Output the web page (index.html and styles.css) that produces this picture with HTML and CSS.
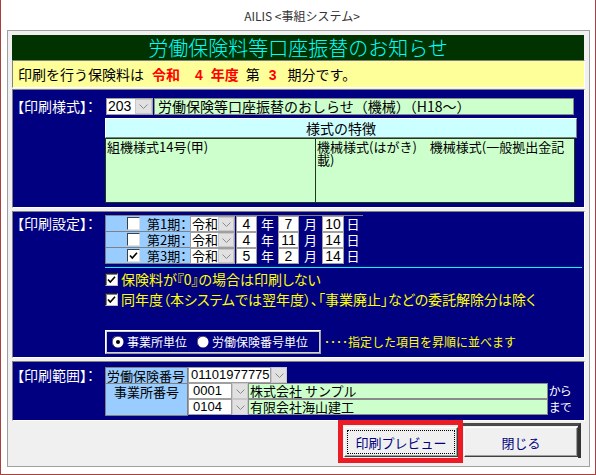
FILE: index.html
```html
<!DOCTYPE html>
<html lang="ja">
<head>
<meta charset="utf-8">
<title>AILIS</title>
<link rel="stylesheet" href="styles.css">
</head>
<body>
<div class="window">
  <div class="titlebar">AILIS &lt;事組システム&gt;</div>
  <div class="frame">
    <div class="header">労働保険料等口座振替のお知らせ</div>
    <div class="notice">印刷を行う保険料は<span class="red m-a">令和</span><span class="red m-b">4</span><span class="red m-c">年度</span><span class="m-d">第</span><span class="red m-e">3</span><span class="m-f">期分です。</span></div>

    <section class="panel panel-style">
      <div class="plabel">【印刷様式】：</div>
      <div class="pbody">
        <div class="row1">
          <div class="combo c-203"><span class="cval">203</span><span class="dd"><svg class="chev" viewBox="0 0 9 5" width="9" height="5"><polyline points="0.5,0.5 4.5,4.5 8.5,0.5" fill="none" stroke="#8a8a8a" stroke-width="1"/></svg></span></div>
          <div class="gfield">労働保険等口座振替のおしらせ（機械）（H18～）</div>
        </div>
        <div class="feat-head">様式の特徴</div>
        <div class="feat-body">
          <div class="fc fc-left">組機様式14号(甲)</div>
          <div class="fc fc-right">機械様式(はがき)　機械様式(一般拠出金記<br>載)</div>
        </div>
      </div>
    </section>

    <section class="panel panel-set">
      <div class="plabel">【印刷設定】：</div>
      <div class="pbody">
        <div class="ptable">
          <div class="prow">
            <div class="pcell"><span class="cb"></span><span class="plab">第1期：</span></div>
            <div class="combo c-era"><span class="cval">令和</span><span class="dd"><svg class="chev" viewBox="0 0 9 5" width="9" height="5"><polyline points="0.5,0.5 4.5,4.5 8.5,0.5" fill="none" stroke="#8a8a8a" stroke-width="1"/></svg></span></div>
            <span class="nbox n-y">4</span><span class="unit u-y">年</span>
            <span class="nbox n-m">7</span><span class="unit u-m">月</span>
            <span class="nbox n-d">10</span><span class="unit u-d">日</span>
          </div>
          <div class="prow">
            <div class="pcell"><span class="cb"></span><span class="plab">第2期：</span></div>
            <div class="combo c-era"><span class="cval">令和</span><span class="dd"><svg class="chev" viewBox="0 0 9 5" width="9" height="5"><polyline points="0.5,0.5 4.5,4.5 8.5,0.5" fill="none" stroke="#8a8a8a" stroke-width="1"/></svg></span></div>
            <span class="nbox n-y">4</span><span class="unit u-y">年</span>
            <span class="nbox n-m">11</span><span class="unit u-m">月</span>
            <span class="nbox n-d">14</span><span class="unit u-d">日</span>
          </div>
          <div class="prow">
            <div class="pcell"><span class="cb"><svg viewBox="0 0 11 11" width="11" height="11"><path d="M2 5.5 L4.3 8 L9 2.8" fill="none" stroke="#000" stroke-width="1.6"/></svg></span><span class="plab">第3期：</span></div>
            <div class="combo c-era"><span class="cval">令和</span><span class="dd"><svg class="chev" viewBox="0 0 9 5" width="9" height="5"><polyline points="0.5,0.5 4.5,4.5 8.5,0.5" fill="none" stroke="#8a8a8a" stroke-width="1"/></svg></span></div>
            <span class="nbox n-y">5</span><span class="unit u-y">年</span>
            <span class="nbox n-m">2</span><span class="unit u-m">月</span>
            <span class="nbox n-d">14</span><span class="unit u-d">日</span>
          </div>
        </div>
        <div class="hr"></div>
        <div class="crow crow-first"><span class="cb cb-dark"><svg viewBox="0 0 11 11" width="11" height="11"><path d="M2 5.5 L4.3 8 L9 2.8" fill="none" stroke="#000" stroke-width="1.6"/></svg></span><span class="ctext">保険料が『0』の場合は印刷しない</span></div>
        <div class="crow"><span class="cb cb-dark"><svg viewBox="0 0 11 11" width="11" height="11"><path d="M2 5.5 L4.3 8 L9 2.8" fill="none" stroke="#000" stroke-width="1.6"/></svg></span><span class="ctext">同年度（本システムでは翌年度）、「事業廃止」などの委託解除分は除く</span></div>
        <div class="sortline">
          <div class="radiogroup">
            <span class="radio"><svg viewBox="0 0 12 12" width="12" height="12"><circle cx="6" cy="6" r="5.5" fill="#fff"/><path d="M1.5 9.5 A5 5 0 0 1 9.5 1.5" fill="none" stroke="#606060" stroke-width="1"/><circle cx="6" cy="6" r="2" fill="#000"/></svg></span>
            <span class="rtext">事業所単位</span>
            <span class="radio r2"><svg viewBox="0 0 12 12" width="12" height="12"><circle cx="6" cy="6" r="5.5" fill="#fff"/><path d="M1.5 9.5 A5 5 0 0 1 9.5 1.5" fill="none" stroke="#606060" stroke-width="1"/></svg></span>
            <span class="rtext">労働保険番号単位</span>
          </div>
          <span class="hint">････指定した項目を昇順に並べます</span>
        </div>
      </div>
    </section>

    <section class="panel panel-range">
      <div class="plabel">【印刷範囲】：</div>
      <div class="pbody">
        <div class="rtable">
          <div class="rleft">
            <div class="rl1">労働保険番号</div>
            <div class="rl2">事業所番号</div>
          </div>
          <div class="rright">
            <div class="rrow"><span class="wbox w-ins">01101977775</span><span class="dd dd-r"><svg class="chev" viewBox="0 0 9 5" width="9" height="5"><polyline points="0.5,0.5 4.5,4.5 8.5,0.5" fill="none" stroke="#8a8a8a" stroke-width="1"/></svg></span></div>
            <div class="rrow"><span class="wbox w-no">0001</span><span class="dd dd-r"><svg class="chev" viewBox="0 0 9 5" width="9" height="5"><polyline points="0.5,0.5 4.5,4.5 8.5,0.5" fill="none" stroke="#8a8a8a" stroke-width="1"/></svg></span><span class="gfield2">株式会社 サンプル</span><span class="kara">から</span></div>
            <div class="rrow"><span class="wbox w-no">0104</span><span class="dd dd-r"><svg class="chev" viewBox="0 0 9 5" width="9" height="5"><polyline points="0.5,0.5 4.5,4.5 8.5,0.5" fill="none" stroke="#8a8a8a" stroke-width="1"/></svg></span><span class="gfield2">有限会社海山建工</span><span class="kara">まで</span></div>
          </div>
        </div>
      </div>
    </section>

    <div class="btnbar">
      <div class="redbox"><button class="btn btn-focus" type="button">印刷プレビュー</button></div>
      <div class="closegroup"><button class="btn" type="button">閉じる</button></div>
    </div>
  </div>
</div>
</body>
</html>
```

FILE: styles.css
```css
* { box-sizing: border-box; margin: 0; padding: 0; }
body {
  margin: 0;
  background: #fff;
  font-family: "Noto Sans CJK JP", "Liberation Sans", sans-serif;
  color: #000;
}
.window {
  width: 596px;
  height: 475px;
  border: 1px solid #a8413e;
  border-top: none;
  background: #fff;
}
.titlebar {
  height: 30px;
  padding: 4px 0 0 8px;
  text-align: center;
  font-size: 12px;
  line-height: 24px;
  color: #333;
}
.frame {
  margin-left: 6px;
  width: 583px;
  height: 437px;
  border: 1px solid #a0a0a0;
  background: #f0f0f0;
  padding: 4px 4px 0 4px;
}
.header {
  width: 572px;
  height: 25px;
  background: #003300;
  color: #00ffff;
  font-size: 20px;
  font-weight: 300;
  line-height: 25px;
  text-align: center;
}
.notice {
  height: 28px;
  background: #ffff99;
  border: 1px solid;
  border-color: #808080 #fff #fff #808080;
  padding-left: 5px;
  font-size: 14px;
  line-height: 26px;
  white-space: nowrap;
}
.notice span { display: inline-block; }
.red { color: #ff0000; font-weight: bold; }
.m-a { margin-left: 8px; }
.m-b { margin-left: 15px; font-family: "Liberation Sans", sans-serif; }
.m-c { margin-left: 8px; }
.m-d { margin-left: 7px; }
.m-e { margin-left: 9px; font-family: "Liberation Sans", sans-serif; }
.m-f { margin-left: 11px; }

.panel {
  background: #000080;
  border: 1px solid;
  border-color: #808080 #fff #fff #808080;
  display: grid;
  grid-template-columns: 92px 1fr;
}
.panel-style { margin-top: 1px; height: 119px; padding-top: 8px; }
.panel-set { margin-top: 3px; height: 147px; padding-top: 3px; }
.panel-range { margin-top: 3px; height: 60px; padding-top: 5px; }
.plabel {
  color: #fff;
  font-size: 14px;
  padding-left: 4px;
  line-height: 17px;
  font-feature-settings: "palt";
  white-space: nowrap;
}
.pbody { min-width: 0; }

.row1 { display: flex; height: 17px; }
.combo {
  display: flex;
  height: 17px;
  border: 1px solid #a0a0a0;
  background: #fff;
}
.c-203 { width: 47px; margin-left: 1px; }
.cval {
  flex: 1;
  font-size: 14px;
  line-height: 15px;
  padding-left: 1px;
  white-space: nowrap;
}
.c-203 .cval { font-family: "Liberation Sans", sans-serif; }
.dd {
  width: 17px;
  background: #e1e1e1;
  border: 1px solid #c8c8c8;
  display: flex;
  align-items: center;
  justify-content: center;
}
.gfield {
  width: 420px;
  margin-left: 1px;
  height: 17px;
  background: #ccffcc;
  border: 1px solid #8a8a8a;
  font-size: 14px;
  line-height: 15px;
  padding-left: 3px;
  white-space: nowrap;
}
.feat-head {
  margin-top: 3px;
  width: 472px;
  height: 20px;
  background: #ccffff;
  border: 1px solid;
  border-color: #fff #808080 #808080 #fff;
  text-align: center;
  font-size: 14px;
  line-height: 18px;
}
.feat-body {
  width: 470px;
  height: 65px;
  background: #ccffcc;
  border: 1px solid #1a3a1a;
  display: grid;
  grid-template-columns: 210px 1fr;
  font-size: 13px;
  line-height: 13px;
}
.fc { padding: 1px 0 0 1px; }
.fc-left { border-right: 1px solid #1a3a1a; }

/* period table */
.ptable { border-top: 1px solid #808080; width: 258px; }
.prow { display: flex; height: 16px; }
.pcell {
  width: 85px;
  background: #99ccff;
  border-left: 1px solid #808080;
  border-bottom: 1px solid #808080;
  display: flex;
  align-items: center;
  padding-left: 21px;
}
.cb {
  width: 13px;
  height: 13px;
  background: #fff;
  border: 1px solid;
  border-color: #404040 #e0e0e0 #e0e0e0 #404040;
  display: inline-flex;
  align-items: center;
  justify-content: center;
  flex: none;
}
.plab {
  margin-left: 7px;
  font-size: 13px;
  line-height: 15px;
  white-space: nowrap;
  font-feature-settings: "palt";
}
.c-era { width: 45px; height: 16px; border-color: #a0a0a0; }
.c-era .cval { font-size: 13px; line-height: 14px; }
.nbox {
  height: 16px;
  background: #fff;
  border: 1px solid #a0a0a0;
  font-family: "Liberation Sans", sans-serif;
  font-size: 14px;
  line-height: 14px;
  text-align: center;
}
.n-y { width: 21px; margin-left: 1px; }
.n-m { width: 21px; }
.n-d { width: 22px; }
.unit {
  color: #fff;
  font-size: 13px;
  line-height: 15px;
  text-align: center;
}
.u-y { width: 21px; }
.u-m { width: 23px; }
.u-d { width: 18px; }

.hr { margin-top: 3px; height: 1px; width: 477px; background: #00ffff; }
.crow { display: flex; align-items: center; height: 20px; }
.crow-first { margin-top: 1px; }
.cb-dark { border-color: #202020 #c0c0c0 #c0c0c0 #202020; box-shadow: inset 1px 1px 0 #808080; }
.ctext {
  margin-left: 3px;
  color: #ffff00;
  font-size: 14px;
  line-height: 16px;
  font-feature-settings: "palt";
  white-space: nowrap;
}
.sortline { display: flex; align-items: center; margin-top: 21px; height: 24px; }
.radiogroup {
  width: 216px;
  height: 24px;
  border: 2px solid;
  border-color: #fff #a0a0a0 #a0a0a0 #fff;
  outline: 1px solid #d0d0d0;
  outline-offset: -2px;
  display: flex;
  align-items: center;
  padding-left: 5px;
}
.radio { display: inline-flex; width: 12px; height: 12px; }
.r2 { margin-left: 10px; }
.rtext { margin-left: 3px; color: #fff; font-size: 12px; line-height: 14px; white-space: nowrap; }
.hint {
  margin-left: 3px;
  color: #ffff00;
  font-size: 12px;
  line-height: 14px;
  white-space: nowrap;
}

/* range table */
.rtable { display: flex; }
.rleft {
  width: 83px;
  height: 49px;
  background: #99ccff;
  border: 1px solid #808080;
  font-size: 13px;
}
.rl1 { height: 16px; border-bottom: 1px solid #808080; line-height: 15px; padding-left: 1px; white-space: nowrap; }
.rl2 { text-align: center; line-height: 16px; }
.rright { display: flex; flex-direction: column; }
.rrow { display: flex; height: 16px; align-items: stretch; }
.wbox {
  background: #fff;
  border: 1px solid #a0a0a0;
  font-family: "Liberation Sans", sans-serif;
  font-size: 13px;
  line-height: 14px;
  padding-left: 2px;
}
.w-ins { width: 83px; }
.w-no { width: 44px; padding-left: 4px; }
.dd-r { width: 16px; }
.gfield2 {
  width: 300px;
  background: #ccffcc;
  border: 1px solid #8a8a8a;
  font-size: 13px;
  line-height: 14px;
  padding-left: 1px;
  white-space: nowrap;
}
.kara {
  margin-left: 1px;
  color: #fff;
  font-size: 12px;
  line-height: 16px;
  font-feature-settings: "palt";
}

/* buttons */
.btnbar { display: flex; justify-content: flex-end; padding-right: 4px; height: 45px; }
.redbox {
  width: 125px;
  height: 43px;
  margin-top: -1px;
  border: 5px solid #ed1c24;
  padding: 2px 0 0 1px;
}
.btn {
  display: flex;
  align-items: center;
  justify-content: center;
  width: 100%;
  height: 30px;
  background: #f0f0f0;
  border: 1px solid;
  border-color: #fff #404040 #404040 #fff;
  box-shadow: inset -1px -1px 0 #a0a0a0;
  color: #000080;
  font-family: "Noto Sans CJK JP", sans-serif;
  font-size: 13px;
}
.btn-focus { outline: 1px dotted #000; outline-offset: -4px; }
.closegroup {
  width: 118px;
  margin-top: 2px;
  height: 35px;
  border-top: 3px solid #4a4a4a;
  border-right: 3px solid #333;
  padding: 1px 0 0 1px;
}
```
